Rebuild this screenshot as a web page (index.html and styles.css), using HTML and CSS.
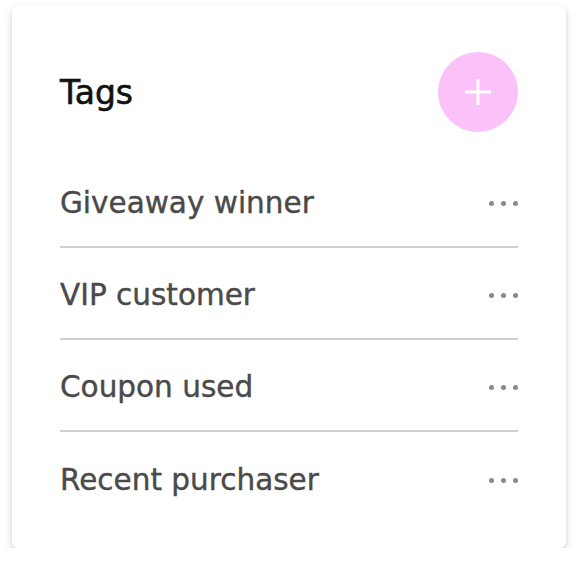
FILE: index.html
```html
<!DOCTYPE html>
<html lang="en">
  <head>
    <meta charset="UTF-8" />
    <title>Tags</title>
    <link rel="stylesheet" href="styles.css">
  </head>
  <body>
    <div class="card">
      <div class="card-header">
        <h1>Tags</h1>
        <button class="add-btn" aria-label="Add tag">
          <svg width="28" height="28" viewBox="0 0 28 28">
            <path d="M14 1V27M1 14H27" stroke="#fff" stroke-width="3" />
          </svg>
        </button>
      </div>

      <ul class="tag-list">
        <li class="tag-row">
          <span class="tag-name">Giveaway winner</span>
          <span class="more"><i></i><i></i><i></i></span>
        </li>
        <li class="tag-row">
          <span class="tag-name">VIP customer</span>
          <span class="more"><i></i><i></i><i></i></span>
        </li>
        <li class="tag-row">
          <span class="tag-name">Coupon used</span>
          <span class="more"><i></i><i></i><i></i></span>
        </li>
        <li class="tag-row">
          <span class="tag-name">Recent purchaser</span>
          <span class="more"><i></i><i></i><i></i></span>
        </li>
      </ul>
    </div>
  </body>
</html>
```

FILE: styles.css
```css
body {
  margin: 0;
  padding: 5px 12px 0 12px;
  background-color: white;
  font-family: "DejaVu Sans", "Liberation Sans", sans-serif;
}

.card {
  width: 554px;
  height: 543px;
  box-sizing: border-box;
  padding: 47px 48px 26px 48px;
  background-color: #fff;
  border-radius: 6px;
  box-shadow: 0 5px 8px rgba(110, 120, 170, 0.28), 0 0 3px rgba(110, 120, 170, 0.12);
}

.card-header {
  display: flex;
  justify-content: space-between;
  align-items: center;
  height: 80px;
  margin-bottom: 24px;
}

.card-header h1 {
  margin: 0;
  font-size: 33px;
  font-weight: normal;
  color: #111;
  -webkit-text-stroke: 0.6px #111;
}

.add-btn {
  width: 80px;
  height: 80px;
  border: none;
  border-radius: 50%;
  background-color: #fbc1f9;
  display: flex;
  justify-content: center;
  align-items: center;
  padding: 0;
}

.tag-list {
  list-style: none;
  margin: 0;
  padding: 0;
}

.tag-row {
  display: flex;
  justify-content: space-between;
  align-items: center;
  height: 92px;
  box-sizing: border-box;
  border-bottom: 2px solid #cfcfcf;
}

.tag-row:last-child {
  border-bottom: none;
}

.tag-name {
  padding-top: 3px;
  font-size: 29.5px;
  color: #4a4a4a;
  -webkit-text-stroke: 0.4px #4a4a4a;
}

/* 3点メニュー */
.more {
  display: flex;
  gap: 7px;
  margin-top: 4px;
}

.more i {
  width: 5px;
  height: 5px;
  border-radius: 50%;
  background-color: #8a8a8a;
}
```
